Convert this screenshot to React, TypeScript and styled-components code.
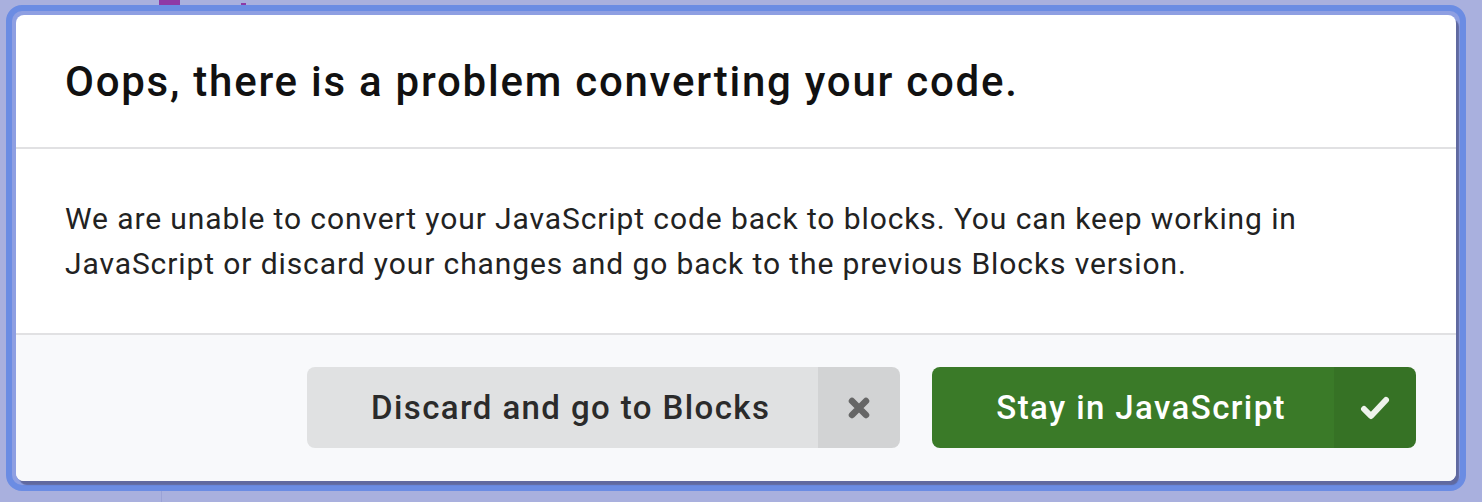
import * as React from 'react';
import styled, { createGlobalStyle } from 'styled-components';

const GlobalStyle = createGlobalStyle`
	html, body {
		margin: 0;
		padding: 0;
		background: #a9b0de;
	}
	body {
		font-family: Roboto, 'Liberation Sans', sans-serif;
		-webkit-font-smoothing: antialiased;
	}
`;

const CloseIcon = () => (
	<svg width="24" height="24" viewBox="0 0 24 24">
		<path d="M5 5L19 19M19 5L5 19" stroke="currentColor" strokeWidth="6.5" strokeLinecap="round" fill="none" />
	</svg>
);

const CheckIcon = () => (
	<svg width="30" height="24" viewBox="0 0 30 24">
		<path d="M4 13L11 20L26 4" stroke="currentColor" strokeWidth="6" strokeLinecap="round" strokeLinejoin="round" fill="none" />
	</svg>
);

const App = () => {
	return (
		<Page>
			<GlobalStyle />
			<Backdrop>
				<span className="mark magenta" />
				<span className="mark bar" />
				<span className="mark navy" />
				<span className="band" />
			</Backdrop>
			<Ring>
				<Dialog>
					<Header>Oops, there is a problem converting your code.</Header>
					<Content>
						We are unable to convert your JavaScript code back to blocks. You can keep working in
						JavaScript or discard your changes and go back to the previous Blocks version.
					</Content>
					<Actions>
						<LabeledButton tone="grey">
							<span className="label">Discard and go to Blocks</span>
							<span className="icon">
								<CloseIcon />
							</span>
						</LabeledButton>
						<LabeledButton tone="green">
							<span className="label">Stay in JavaScript</span>
							<span className="icon">
								<CheckIcon />
							</span>
						</LabeledButton>
					</Actions>
				</Dialog>
			</Ring>
		</Page>
	);
};

export default App;

const Page = styled.div`
	position: relative;
	width: 1482px;
	height: 502px;
	box-sizing: border-box;
	padding: 5px 16px 11px 6px;
	overflow: hidden;
`;

const Backdrop = styled.div`
	position: absolute;
	inset: 0;
	.mark {
		position: absolute;
		display: block;
	}
	.magenta {
		left: 159px;
		top: 0;
		width: 21px;
		height: 15px;
		background: #8e3aa6;
	}
	.bar {
		left: 241px;
		top: 3px;
		width: 5px;
		height: 12px;
		background: #8e3aa6;
	}
	.navy {
		left: 161px;
		top: 486px;
		width: 1px;
		height: 16px;
		background: #9aa2d6;
	}
	.band {
		right: 0;
		top: 50px;
		width: 17px;
		height: 50px;
		background: #9aa3dc;
	}
`;

const Ring = styled.div`
	position: relative;
	height: 100%;
	box-sizing: border-box;
	border: 6px solid #6b8ce3;
	border-radius: 16px;
	padding: 4px;
	background: #8e9fe2;
`;

const Dialog = styled.div`
	height: 100%;
	display: flex;
	flex-direction: column;
	background: #fff;
	border-radius: 8px;
	overflow: hidden;
	box-shadow: 3px 4px 1px rgba(40, 40, 80, 0.45);
`;

const Header = styled.div`
	height: 134px;
	box-sizing: border-box;
	display: flex;
	align-items: center;
	padding: 0 49px;
	border-bottom: 2px solid #e1e1e3;
	font-size: 42px;
	font-weight: 500;
	letter-spacing: 1.75px;
	color: #111;
`;

const Content = styled.div`
	height: 186px;
	box-sizing: border-box;
	display: flex;
	align-items: center;
	padding: 0 49px;
	border-bottom: 2px solid #e1e1e3;
	font-size: 30px;
	line-height: 45px;
	letter-spacing: 0.9px;
	color: #222;
`;

const Actions = styled.div`
	flex: 1;
	display: flex;
	justify-content: flex-end;
	align-items: flex-start;
	gap: 32px;
	padding: 32px 40px 0 0;
	background: #f8f9fb;
`;

const LabeledButton = styled.div<{ tone: 'grey' | 'green' }>`
	display: flex;
	height: 81px;
	border-radius: 8px;
	overflow: hidden;
	background: ${(p) => (p.tone === 'green' ? '#3a7a28' : '#e0e1e2')};
	color: ${(p) => (p.tone === 'green' ? '#fff' : '#2b2b2b')};
	font-size: 33px;
	font-weight: 500;
	letter-spacing: 1.4px;
	cursor: pointer;
	.label {
		display: flex;
		align-items: center;
		padding: 0 48px 0 64px;
	}
	.icon {
		width: 82px;
		display: flex;
		align-items: center;
		justify-content: center;
		background: rgba(0, 0, 0, 0.06);
		color: ${(p) => (p.tone === 'green' ? '#eef3ec' : '#666')};
	}
`;
